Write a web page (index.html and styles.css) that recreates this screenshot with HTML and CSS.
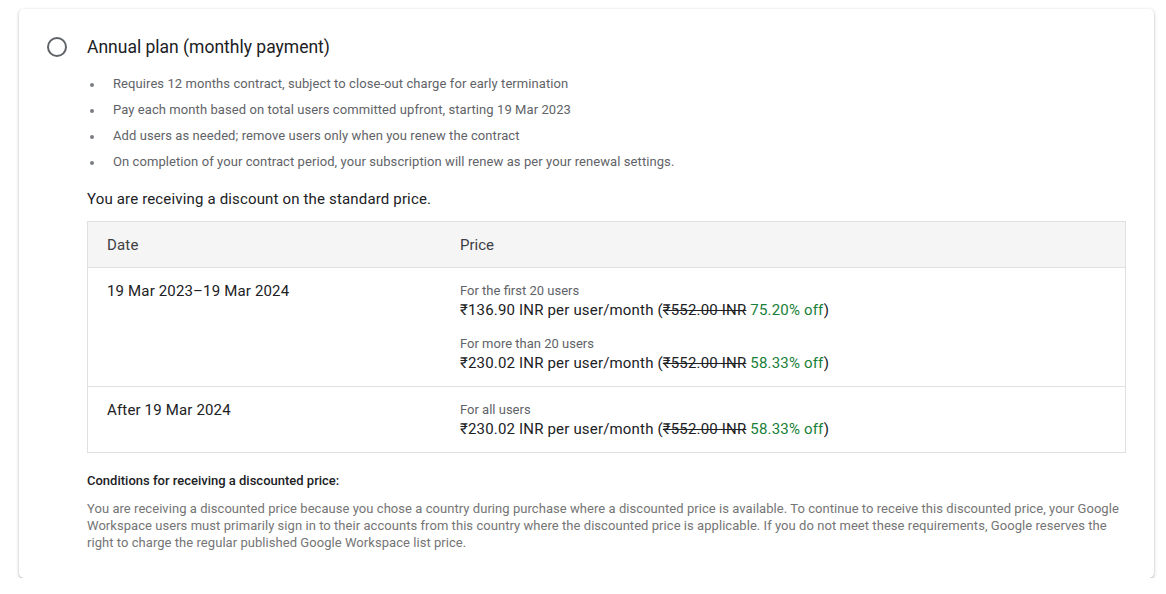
FILE: index.html
```html
<!DOCTYPE html>
<html>
<head>
<meta charset="utf-8">
<link rel="stylesheet" href="styles.css">
</head>
<body>
<div class="card">
  <div class="header">
    <span class="radio"></span>
    <span class="title">Annual plan (monthly payment)</span>
  </div>
  <div class="content">
    <ul class="bullets">
      <li>Requires 12 months contract, subject to close-out charge for early termination</li>
      <li>Pay each month based on total users committed upfront, starting 19 Mar 2023</li>
      <li>Add users as needed; remove users only when you renew the contract</li>
      <li>On completion of your contract period, your subscription will renew as per your renewal settings.</li>
    </ul>
    <p class="discount">You are receiving a discount on the standard price.</p>
    <div class="table">
      <div class="row head">
        <div class="cell date">Date</div>
        <div class="cell price">Price</div>
      </div>
      <div class="row">
        <div class="cell date">19 Mar 2023–19 Mar 2024</div>
        <div class="cell price">
          <div class="group">
            <div class="label">For the first 20 users</div>
            <div class="amount">₹136.90 INR per user/month (<s>₹552.00 INR</s> <span class="off">75.20% off</span>)</div>
          </div>
          <div class="group">
            <div class="label">For more than 20 users</div>
            <div class="amount">₹230.02 INR per user/month (<s>₹552.00 INR</s> <span class="off">58.33% off</span>)</div>
          </div>
        </div>
      </div>
      <div class="row">
        <div class="cell date">After 19 Mar 2024</div>
        <div class="cell price">
          <div class="group">
            <div class="label">For all users</div>
            <div class="amount">₹230.02 INR per user/month (<s>₹552.00 INR</s> <span class="off">58.33% off</span>)</div>
          </div>
        </div>
      </div>
    </div>
    <h4 class="cond-title">Conditions for receiving a discounted price:</h4>
    <p class="cond-text">You are receiving a discounted price because you chose a country during purchase where a discounted price is available. To continue to receive this discounted price, your Google Workspace users must primarily sign in to their accounts from this country where the discounted price is applicable. If you do not meet these requirements, Google reserves the right to charge the regular published Google Workspace list price.</p>
  </div>
</div>
</body>
</html>
```
FILE: styles.css
```css
html, body {
  margin: 0;
  padding: 0;
  background: #ffffff;
  font-family: Roboto, "Noto Sans", "Liberation Sans", sans-serif;
  color: #202124;
}
.card {
  box-sizing: border-box;
  width: 1135px;
  margin: 9px 0 0 19px;
  padding: 26px 28px 27px 28px;
  border-radius: 5px;
  background: #fff;
  box-shadow: 0 1px 2px rgba(60,64,67,.28), 0 1px 3px 1px rgba(60,64,67,.12);
}
.header {
  display: flex;
  align-items: center;
  gap: 20px;
  height: 24px;
}
.radio {
  box-sizing: border-box;
  width: 20px;
  height: 20px;
  border: 2px solid #5f6368;
  border-radius: 50%;
}
.title {
  font-size: 17.5px;
  line-height: 24px;
  color: #202124;
}
.content {
  margin-left: 40px;
}
.bullets {
  list-style: none;
  margin: 12px 0 0 0;
  padding: 0;
}
.bullets li {
  position: relative;
  font-size: 13px;
  line-height: 26px;
  letter-spacing: 0.08px;
  color: #5f6368;
  padding-left: 26px;
}
.bullets li::before {
  content: "";
  position: absolute;
  left: 3px;
  top: 12px;
  width: 4px;
  height: 4px;
  border-radius: 50%;
  background: #7a7e83;
}
.discount {
  margin: 14px 0 0 0;
  font-size: 15px;
  line-height: 20px;
  letter-spacing: 0.16px;
  color: #202124;
}
.table {
  margin-top: 12px;
  border: 1px solid #e0e0e0;
}
.row {
  display: flex;
  border-top: 1px solid #e0e0e0;
}
.row:first-child {
  border-top: none;
}
.row.head {
  background: #f5f5f5;
  height: 45px;
  align-items: center;
}
.cell {
  box-sizing: border-box;
}
.cell.date {
  width: 372px;
  padding-left: 19px;
  font-size: 15px;
  line-height: 20px;
  letter-spacing: 0.16px;
  color: #202124;
}
.row.head .cell {
  font-size: 15px;
  color: #3c4043;
}
.row:not(.head) .cell {
  padding-top: 13px;
  padding-bottom: 13px;
}
.cell.price {
  flex: 1;
}
.group + .group {
  margin-top: 14px;
}
.label {
  font-size: 13px;
  line-height: 19px;
  color: #5f6368;
}
.amount {
  font-size: 15px;
  line-height: 20px;
  letter-spacing: 0.18px;
  color: #202124;
}
.amount s {
  text-decoration: line-through;
}
.off {
  color: #188038;
}
.cond-title {
  margin: 20px 0 0 0;
  font-size: 13px;
  line-height: 16px;
  font-weight: 500;
  color: #202124;
}
.cond-text {
  margin: 11px 0 0 0;
  font-size: 13px;
  line-height: 17px;
  letter-spacing: 0.05px;
  color: #757575;
}
```
